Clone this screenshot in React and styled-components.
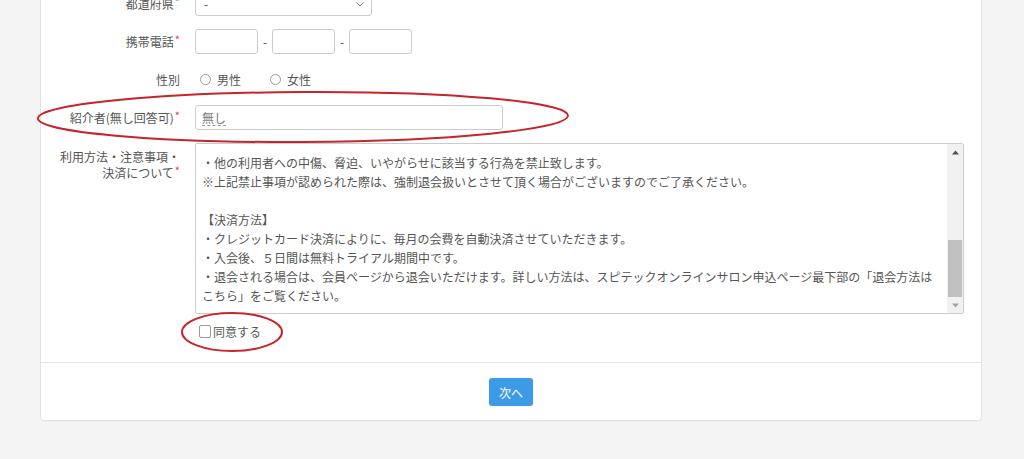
import React from "react";
import styled, { createGlobalStyle } from "styled-components";

const Global = createGlobalStyle`
  html, body { margin: 0; padding: 0; background: #f4f4f4; overflow: hidden; }
  body { font-family: "Noto Sans CJK JP", "Noto Sans", sans-serif; color: #555; }
  * { box-sizing: border-box; }
`;

const Page = styled.div`
  position: relative;
  width: 1024px;
  height: 459px;
  padding: 0 42px 0 40px;
  overflow: hidden;
`;

const Card = styled.div`
  margin-top: -30px;
  background: #fff;
  border: 1px solid #e2e2e2;
  border-radius: 4px;
  box-shadow: 0 1px 1px rgba(0, 0, 0, 0.03);
`;

const Body = styled.div`
  display: grid;
  grid-template-columns: 139px 1fr;
  column-gap: 15px;
  row-gap: 13px;
  padding: 20px 17px 21px 0;
`;

const Label = styled.div`
  font-size: 12px;
  line-height: 16px;
  text-align: right;
  color: #555;
  display: flex;
  justify-content: flex-end;
  align-items: ${(p) => (p.$top ? "flex-start" : "center")};
  padding-top: ${(p) => (p.$top ? "6px" : "0")};
  height: ${(p) => (p.$top ? "auto" : "25px")};
`;

const Req = styled.span`
  color: #e0474c;
  font-size: 11px;
  line-height: 0;
  position: relative;
  top: -3px;
  margin-left: 1px;
`;

const Field = styled.div`
  display: flex;
  align-items: center;
  min-height: 25px;
`;

const FieldCol = styled.div`
  display: flex;
  flex-direction: column;
  align-items: flex-start;
`;

const Select = styled.div`
  width: 177px;
  height: 25px;
  border: 1px solid #ccc;
  border-radius: 3px;
  display: flex;
  align-items: center;
  justify-content: space-between;
  padding: 0 6px 0 8px;
  font-size: 12px;
  color: #555;
`;

const TextBox = styled.div`
  width: ${(p) => p.$w}px;
  height: 25px;
  border: 1px solid #ccc;
  border-radius: 3px;
  display: flex;
  align-items: center;
  padding: 0 6px;
  font-size: 12px;
  color: #888;
`;

const PhoneGroup = styled.div`
  display: flex;
  align-items: center;
  gap: 4px;
`;

const Dash = styled.span`
  width: 6px;
  text-align: center;
  font-size: 12px;
  color: #555;
`;

const RadioGroup = styled.div`
  display: flex;
  align-items: center;
  padding-left: 5px;
  gap: 29px;
`;

const RadioItem = styled.label`
  display: flex;
  align-items: center;
  gap: 6px;
  font-size: 12px;
  color: #555;
`;

const RadioCircle = styled.span`
  width: 11px;
  height: 11px;
  border: 1px solid #9a9a9a;
  border-radius: 50%;
  display: inline-block;
`;

const Composing = styled.span`
  color: #777;
  border-bottom: 1px dashed #999;
  line-height: 14px;
  padding-top: 2px;
`;

const TextArea = styled.div`
  width: 769px;
  height: 171px;
  border: 1px solid #ccc;
  border-radius: 2px;
  display: flex;
  overflow: hidden;
`;

const TextContent = styled.div`
  flex: 1;
  padding: 9px 6px 0 6px;
  font-size: 12px;
  line-height: 19px;
  color: #555;
  white-space: pre-wrap;
  overflow: hidden;
`;

const Scrollbar = styled.div`
  width: 16px;
  background: #f1f1f1;
  display: flex;
  flex-direction: column;
`;

const Arrow = styled.div`
  height: 16px;
  display: flex;
  align-items: center;
  justify-content: center;
`;

const Track = styled.div`
  flex: 1;
  display: flex;
  flex-direction: column;
  justify-content: flex-end;
`;

const Thumb = styled.div`
  height: 57px;
  margin: 0 1px;
  background: #c1c1c1;
`;

const Agree = styled.label`
  margin-top: 7px;
  height: 20px;
  display: flex;
  align-items: center;
  padding-left: 4px;
  font-size: 12px;
  color: #555;
`;

const CheckBox = styled.span`
  width: 12px;
  height: 13px;
  border: 1px solid #999;
  border-radius: 2px;
  display: inline-block;
  margin-right: 2px;
`;

const Footer = styled.div`
  border-top: 1px solid #e5e5e5;
  display: flex;
  justify-content: center;
  padding: 15px 0 14px;
`;

const Button = styled.button`
  width: 44px;
  height: 28px;
  border: none;
  border-radius: 3px;
  background: #3d9ae6;
  color: #fff;
  font-family: "Noto Sans CJK JP", sans-serif;
  font-size: 12px;
  padding: 0;
`;

const Overlay = styled.svg`
  position: absolute;
  left: 0;
  top: 0;
  pointer-events: none;
`;

const lines = `・他の利用者への中傷、脅迫、いやがらせに該当する行為を禁止致します。
※上記禁止事項が認められた際は、強制退会扱いとさせて頂く場合がございますのでご了承ください。

【決済方法】
・クレジットカード決済によりに、毎月の会費を自動決済させていただきます。
・入会後、５日間は無料トライアル期間中です。
・退会される場合は、会員ページから退会いただけます。詳しい方法は、スピテックオンラインサロン申込ページ最下部の「退会方法はこちら」をご覧ください。`;

const Chevron = () => (
  <svg width="10" height="10" viewBox="0 0 10 10">
    <path d="M1.5 3.5 L5 7 L8.5 3.5" fill="none" stroke="#777" strokeWidth="1" />
  </svg>
);

const Tri = ({ up }) => (
  <svg width="7" height="5" viewBox="0 0 7 5">
    <path d={up ? "M0 4.5 L3.5 0.5 L7 4.5 Z" : "M0 0.5 L3.5 4.5 L7 0.5 Z"} fill={up ? "#505050" : "#a3a3a3"} />
  </svg>
);

export default function App() {
  return (
    <>
      <Global />
      <Page>
        <Card>
          <Body>
            <Label>
              都道府県<Req>*</Req>
            </Label>
            <Field>
              <Select>
                <span>-</span>
                <Chevron />
              </Select>
            </Field>

            <Label>
              携帯電話<Req>*</Req>
            </Label>
            <Field>
              <PhoneGroup>
                <TextBox $w={63} />
                <Dash>-</Dash>
                <TextBox $w={63} />
                <Dash>-</Dash>
                <TextBox $w={63} />
              </PhoneGroup>
            </Field>

            <Label>性別</Label>
            <Field>
              <RadioGroup>
                <RadioItem>
                  <RadioCircle />
                  男性
                </RadioItem>
                <RadioItem>
                  <RadioCircle />
                  女性
                </RadioItem>
              </RadioGroup>
            </Field>

            <Label>
              紹介者(無し回答可)<Req>*</Req>
            </Label>
            <Field>
              <TextBox $w={308}>
                <Composing>無し</Composing>
              </TextBox>
            </Field>

            <Label $top>
              <span>
                利用方法・注意事項・
                <br />
                決済について<Req>*</Req>
              </span>
            </Label>
            <FieldCol>
              <TextArea>
                <TextContent>{lines}</TextContent>
                <Scrollbar>
                  <Arrow>
                    <Tri up />
                  </Arrow>
                  <Track>
                    <Thumb />
                  </Track>
                  <Arrow>
                    <Tri />
                  </Arrow>
                </Scrollbar>
              </TextArea>
              <Agree>
                <CheckBox />
                同意する
              </Agree>
            </FieldCol>
          </Body>
          <Footer>
            <Button>次へ</Button>
          </Footer>
        </Card>
        <Overlay width="1024" height="459" viewBox="0 0 1024 459">
          <ellipse cx="303" cy="117" rx="265" ry="25" fill="none" stroke="#c8242c" strokeWidth="2" transform="rotate(-0.3 303 117)" />
          <ellipse cx="232" cy="332" rx="50" ry="19" fill="none" stroke="#c8242c" strokeWidth="2" />
        </Overlay>
      </Page>
    </>
  );
}
